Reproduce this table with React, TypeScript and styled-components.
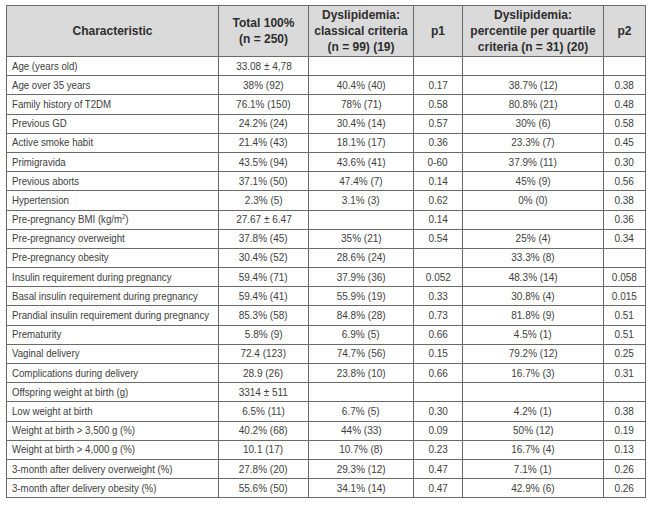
import styled, { createGlobalStyle } from "styled-components";

const GlobalStyle = createGlobalStyle`
  html, body {
    margin: 0;
    padding: 0;
    background: #ffffff;
  }
`;

// 표 한 줄 데이터
interface Row {
  label: React.ReactNode;
  total: string;
  classical: string;
  p1: string;
  percentile: string;
  p2: string;
}

const rows: Row[] = [
  { label: "Age (years old)", total: "33.08 ± 4,78", classical: "", p1: "", percentile: "", p2: "" },
  { label: "Age over 35 years", total: "38% (92)", classical: "40.4% (40)", p1: "0.17", percentile: "38.7% (12)", p2: "0.38" },
  { label: "Family history of T2DM", total: "76.1% (150)", classical: "78% (71)", p1: "0.58", percentile: "80.8% (21)", p2: "0.48" },
  { label: "Previous GD", total: "24.2% (24)", classical: "30.4% (14)", p1: "0.57", percentile: "30% (6)", p2: "0.58" },
  { label: "Active smoke habit", total: "21.4% (43)", classical: "18.1% (17)", p1: "0.36", percentile: "23.3% (7)", p2: "0.45" },
  { label: "Primigravida", total: "43.5% (94)", classical: "43.6% (41)", p1: "0-60", percentile: "37.9% (11)", p2: "0.30" },
  { label: "Previous aborts", total: "37.1% (50)", classical: "47.4% (7)", p1: "0.14", percentile: "45% (9)", p2: "0.56" },
  { label: "Hypertension", total: "2.3% (5)", classical: "3.1% (3)", p1: "0.62", percentile: "0% (0)", p2: "0.38" },
  {
    label: (
      <>
        Pre-pregnancy BMI (kg/m<sup>2</sup>)
      </>
    ),
    total: "27.67 ± 6.47",
    classical: "",
    p1: "0.14",
    percentile: "",
    p2: "0.36",
  },
  { label: "Pre-pregnancy overweight", total: "37.8% (45)", classical: "35% (21)", p1: "0.54", percentile: "25% (4)", p2: "0.34" },
  { label: "Pre-pregnancy obesity", total: "30.4% (52)", classical: "28.6% (24)", p1: "", percentile: "33.3% (8)", p2: "" },
  { label: "Insulin requirement during pregnancy", total: "59.4% (71)", classical: "37.9% (36)", p1: "0.052", percentile: "48.3% (14)", p2: "0.058" },
  { label: "Basal insulin requirement during pregnancy", total: "59.4% (41)", classical: "55.9% (19)", p1: "0.33", percentile: "30.8% (4)", p2: "0.015" },
  { label: "Prandial insulin requirement during pregnancy", total: "85.3% (58)", classical: "84.8% (28)", p1: "0.73", percentile: "81.8% (9)", p2: "0.51" },
  { label: "Prematurity", total: "5.8% (9)", classical: "6.9% (5)", p1: "0.66", percentile: "4.5% (1)", p2: "0.51" },
  { label: "Vaginal delivery", total: "72.4 (123)", classical: "74.7% (56)", p1: "0.15", percentile: "79.2% (12)", p2: "0.25" },
  { label: "Complications during delivery", total: "28.9 (26)", classical: "23.8% (10)", p1: "0.66", percentile: "16.7% (3)", p2: "0.31" },
  { label: "Offspring weight at birth (g)", total: "3314 ± 511", classical: "", p1: "", percentile: "", p2: "" },
  { label: "Low weight at birth", total: "6.5% (11)", classical: "6.7% (5)", p1: "0.30", percentile: "4.2% (1)", p2: "0.38" },
  { label: "Weight at birth > 3,500 g (%)", total: "40.2% (68)", classical: "44% (33)", p1: "0.09", percentile: "50% (12)", p2: "0.19" },
  { label: "Weight at birth > 4,000 g (%)", total: "10.1 (17)", classical: "10.7% (8)", p1: "0.23", percentile: "16.7% (4)", p2: "0.13" },
  { label: "3-month after delivery overweight (%)", total: "27.8% (20)", classical: "29.3% (12)", p1: "0.47", percentile: "7.1% (1)", p2: "0.26" },
  { label: "3-month after delivery obesity (%)", total: "55.6% (50)", classical: "34.1% (14)", p1: "0.47", percentile: "42.9% (6)", p2: "0.26" },
];

// 열 너비 (테두리 기준)
const colWidths = [212, 90, 105, 49, 141, 42];

const Page = styled.div`
  padding: 5px 0 0 6px;
`;

const Table = styled.table`
  border-collapse: collapse;
  table-layout: fixed;
  width: 639px;
  border: 1.5px solid #3a3a3a;
  color: #404040;
`;

const HeadRow = styled.tr`
  height: 51px;
  background: #dadada;
`;

const HeadCell = styled.th`
  border: 1px solid #6a6a6a;
  padding: 0 2px;
  font-family: "Liberation Sans", Arial, sans-serif;
  font-size: 12px;
  font-weight: bold;
  line-height: 16px;
  color: #2e2e2e;
  text-align: center;
  vertical-align: middle;
`;

const BodyRow = styled.tr`
  height: 19.2px;
`;

const Cell = styled.td<{ $left?: boolean }>`
  border: 1px solid #6a6a6a;
  padding: 0 ${(p) => (p.$left ? "5px" : "2px")};
  font-family: "Liberation Sans", Arial, sans-serif;
  font-size: 11.5px;
  line-height: 13px;
  text-align: ${(p) => (p.$left ? "left" : "center")};
  vertical-align: middle;
  white-space: nowrap;
  overflow: visible;

  sup {
    font-size: 7px;
    line-height: 0;
    vertical-align: 4px;
  }
`;

// 원본이 좁은 글꼴(condensed)이라 가로로 눌러줌
const Narrow = styled.span<{ $scale: number; $left?: boolean }>`
  display: inline-block;
  transform: scaleX(${(p) => p.$scale});
  transform-origin: ${(p) => (p.$left ? "left center" : "center center")};
`;

export default function App() {
  return (
    <>
      <GlobalStyle />
      <Page>
        <Table>
          <colgroup>
            {colWidths.map((w, i) => (
              <col key={i} style={{ width: w }} />
            ))}
          </colgroup>
          <thead>
            <HeadRow>
              <HeadCell>Characteristic</HeadCell>
              <HeadCell>
                Total 100%
                <br />
                (n = 250)
              </HeadCell>
              <HeadCell>
                Dyslipidemia:
                <br />
                classical criteria
                <br />
                (n = 99) (19)
              </HeadCell>
              <HeadCell>p1</HeadCell>
              <HeadCell>
                Dyslipidemia:
                <br />
                percentile per quartile
                <br />
                criteria (n = 31) (20)
              </HeadCell>
              <HeadCell>p2</HeadCell>
            </HeadRow>
          </thead>
          <tbody>
            {rows.map((r, i) => (
              <BodyRow key={i}>
                <Cell $left>
                  <Narrow $scale={0.84} $left>
                    {r.label}
                  </Narrow>
                </Cell>
                {[r.total, r.classical, r.p1, r.percentile, r.p2].map((v, j) => (
                  <Cell key={j}>{v && <Narrow $scale={0.87}>{v}</Narrow>}</Cell>
                ))}
              </BodyRow>
            ))}
          </tbody>
        </Table>
      </Page>
    </>
  );
}
